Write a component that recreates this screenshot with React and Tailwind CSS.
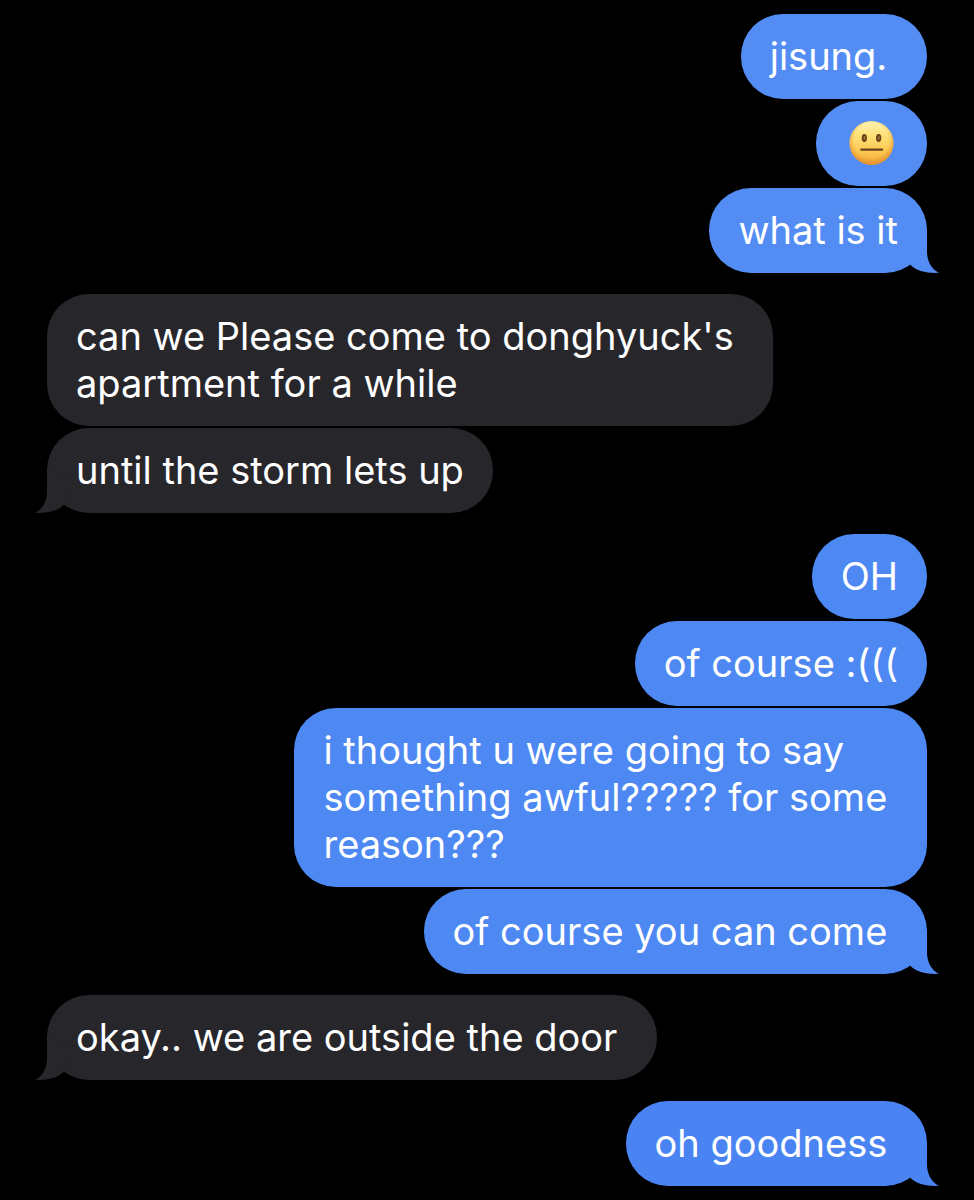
import React from 'react';
import clsx from 'clsx';

const conversation = [
  {
    from: 'me',
    bubble: 'bg-[#538df4]',
    tail: 'text-[#538df4]',
    messages: ['jisung.\u00a0', ':neutral:', 'what is it'],
  },
  {
    from: 'them',
    bubble: 'bg-[#27262b]',
    tail: 'text-[#27262b]',
    messages: [
      "can we Please come to donghyuck's\u00a0\napartment for a while",
      'until the storm lets up',
    ],
  },
  {
    from: 'me',
    bubble: 'bg-[#4d88f3]',
    tail: 'text-[#4d88f3]',
    messages: [
      'OH',
      'of course :(((',
      'i thought u were going to say\nsomething awful????? for some\u00a0\nreason???',
      'of course you can come\u00a0',
    ],
  },
  {
    from: 'them',
    bubble: 'bg-[#27262b]',
    tail: 'text-[#27262b]',
    messages: ['okay.. we are outside the door\u00a0'],
  },
  {
    from: 'me',
    bubble: 'bg-[#4a84f3]',
    tail: 'text-[#4a84f3]',
    messages: ['oh goodness\u00a0'],
  },
];

const NeutralFace = () => (
  <svg
    role="img"
    aria-label="neutral face"
    viewBox="0 0 44 44"
    className="mx-1 h-[47px] w-[45px]"
  >
    <defs>
      <linearGradient id="face" x1="0" y1="0" x2="0" y2="1">
        <stop offset="0" stopColor="#fff3b4" />
        <stop offset="0.3" stopColor="#fee27a" />
        <stop offset="0.7" stopColor="#fcc750" />
        <stop offset="1" stopColor="#f0a63c" />
      </linearGradient>
      <radialGradient id="rim" cx="0.5" cy="0.44" r="0.56">
        <stop offset="0.7" stopColor="#e8952c" stopOpacity="0" />
        <stop offset="1" stopColor="#dc862a" stopOpacity="0.8" />
      </radialGradient>
    </defs>
    <circle cx="22" cy="21.5" r="21.5" fill="url(#face)" />
    <circle cx="22" cy="21.5" r="21.5" fill="url(#rim)" />
    <ellipse cx="15" cy="16.7" rx="2.6" ry="3.9" fill="#69441a" />
    <ellipse cx="29" cy="16.7" rx="2.6" ry="3.9" fill="#69441a" />
    <ellipse cx="15.2" cy="16.3" rx="0.8" ry="1.7" fill="#a57b3a" />
    <ellipse cx="29.2" cy="16.3" rx="0.8" ry="1.7" fill="#a57b3a" />
    <rect x="11" y="26.8" width="22.4" height="2.4" rx="0.8" fill="#69441a" />
  </svg>
);

const Tail = ({ className }) => (
  <svg
    aria-hidden="true"
    viewBox="0 0 39 45"
    className={clsx('absolute bottom-0 h-[45px] w-[39px]', className)}
  >
    <path
      d="M27 0V23C27 33 31 41 39 44.8C27 45.4 16 43 10 36.5L0 12Z"
      fill="currentColor"
    />
  </svg>
);

const Bubble = ({ text, mine, color, tail }) => (
  <li
    className={clsx(
      'relative rounded-[42px] px-[29px] py-[19px] whitespace-pre-line',
      color
    )}
  >
    {tail && (
      <Tail className={clsx(tail, mine ? '-right-3' : '-left-3 -scale-x-100')} />
    )}
    {text === ':neutral:' ? <NeutralFace /> : <p className="relative">{text}</p>}
  </li>
);

const App = () => {
  return (
    <main className="flex min-h-screen flex-col gap-[21px] bg-black px-[47px] py-[14px] font-['Inter',sans-serif] text-[38px] leading-[47px] text-white">
      {conversation.map((group, i) => {
        const mine = group.from === 'me';
        return (
          <ul
            key={i}
            className={clsx(
              'flex flex-col gap-[2px]',
              mine ? 'items-end' : 'items-start'
            )}
          >
            {group.messages.map((text, j) => (
              <Bubble
                key={j}
                text={text}
                mine={mine}
                color={group.bubble}
                tail={j === group.messages.length - 1 && group.tail}
              />
            ))}
          </ul>
        );
      })}
    </main>
  );
};

export default App;
